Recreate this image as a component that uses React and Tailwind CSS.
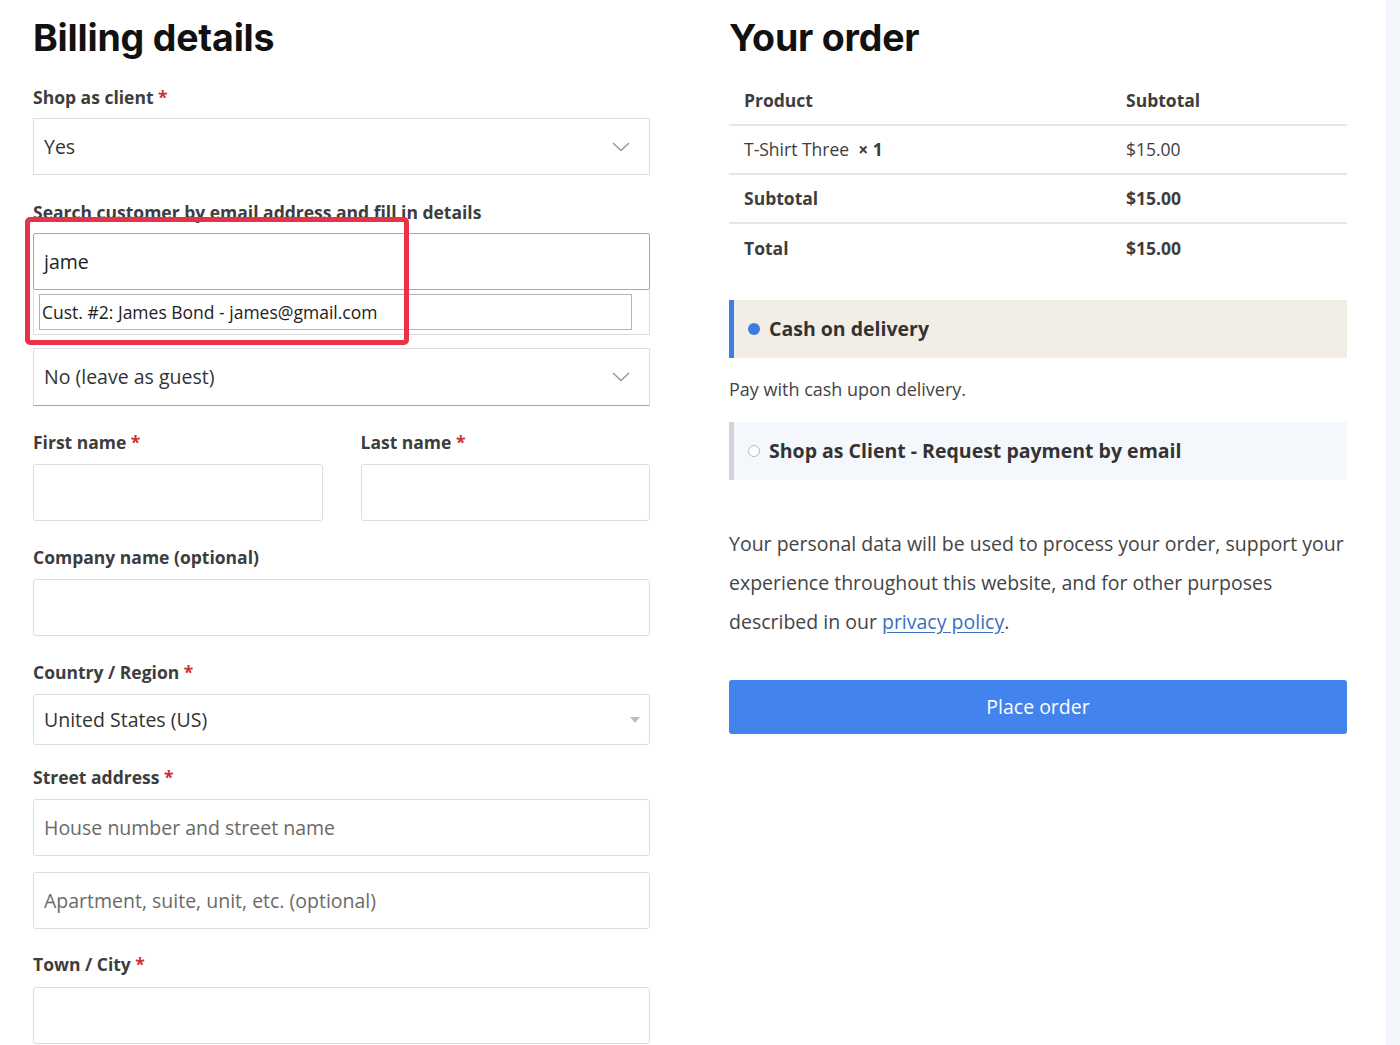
import React from "react";

const body = { fontFamily: '"Open Sans", "Noto Sans", sans-serif' };
const head = { fontFamily: 'Inter, "Open Sans", sans-serif' };

function Chevron() {
  return (
    <svg width="18" height="10" viewBox="0 0 18 10" className="shrink-0">
      <polyline points="1,1 9,8.5 17,1" fill="none" stroke="#9a9a9a" strokeWidth="1.6" />
    </svg>
  );
}

function Label({ children, req, className = "" }) {
  return (
    <div className={"text-[17.5px] leading-[26px] font-bold text-[#3d3d3d] " + className}>
      {children}
      {req && <span className="text-[#cc2f2f]"> *</span>}
    </div>
  );
}

function Input({ placeholder, className = "" }) {
  return (
    <div className={"h-[57px] border border-[#dedede] rounded-[3px] bg-white flex items-center px-[10px] text-[19.5px] text-[#6a6a6a] " + className}>
      {placeholder}
    </div>
  );
}

export default function App() {
  return (
    <div className="w-[1400px] h-[1045px] bg-white flex overflow-hidden" style={body}>
      <div className="w-[33px] shrink-0" />
      {/* Left column */}
      <div className="w-[617px] shrink-0 flex flex-col">
        <h1 className="text-[37.5px] leading-[44px] font-bold text-[#111] mt-[16px] tracking-[-0.2px]" style={head}>
          Billing details
        </h1>
        <Label req className="mt-[24px]">Shop as client</Label>
        <div className="mt-[8px] h-[57px] border border-[#dedede] flex items-center justify-between pl-[10px] pr-[19px] text-[19.5px] text-[#333]">
          <span>Yes</span>
          <Chevron />
        </div>
        <Label className="mt-[24px]">Search customer by email address and fill in details</Label>
        <div className="relative mt-[8px]">
          <div className="h-[57px] border border-[#a8a8a8] rounded-[2px] flex items-center px-[10px] text-[19.5px] text-[#222]">
            jame
          </div>
          <div className="absolute left-0 right-0 top-[57px] h-[45px] border border-t-0 border-[#dcdcdc] bg-white z-10 pl-[5px] pr-[17px] pt-[4px]">
            <div className="h-[36px] border border-[#b4b4b4] bg-white flex items-center pl-[2px] text-[17.5px] text-[#222]">
              Cust. #2: James Bond - james@gmail.com
            </div>
          </div>
          <div className="absolute -left-[8px] -top-[16px] w-[384px] h-[128px] border-[5px] border-[#e6334a] rounded-[5px] z-20" />
        </div>
        <div className="mt-[58px] h-[58px] border border-[#dedede] border-b-[#a3a3a3] flex items-center justify-between pl-[10px] pr-[19px] text-[19.5px] text-[#333]">
          <span>No (leave as guest)</span>
          <Chevron />
        </div>
        <div className="mt-[23px] flex gap-[38px]">
          <div className="flex-1 flex flex-col">
            <Label req>First name</Label>
            <Input className="mt-[9px]" />
          </div>
          <div className="flex-1 flex flex-col">
            <Label req>Last name</Label>
            <Input className="mt-[9px]" />
          </div>
        </div>
        <Label className="mt-[23px]">Company name (optional)</Label>
        <Input className="mt-[9px]" />
        <Label req className="mt-[23px]">Country / Region</Label>
        <div className="mt-[9px] h-[51px] border border-[#dedede] rounded-[3px] flex items-center justify-between pl-[10px] pr-[9px] text-[19.5px] text-[#333]">
          <span>United States (US)</span>
          <svg width="10" height="6" viewBox="0 0 10 6"><polygon points="0,0 10,0 5,6" fill="#bdbdbd" /></svg>
        </div>
        <Label req className="mt-[19px]">Street address</Label>
        <Input className="mt-[9px]" placeholder="House number and street name" />
        <Input className="mt-[16px]" placeholder="Apartment, suite, unit, etc. (optional)" />
        <Label req className="mt-[22px]">Town / City</Label>
        <Input className="mt-[10px]" />
      </div>
      <div className="w-[79px] shrink-0" />
      {/* Right column */}
      <div className="w-[618px] shrink-0 flex flex-col">
        <h1 className="text-[37.5px] leading-[44px] font-bold text-[#111] mt-[16px] tracking-[-0.2px]" style={head}>
          Your order
        </h1>
        <div className="mt-[17px] text-[17.5px] text-[#3d3d3d]">
          <div className="h-[49px] flex items-center font-bold border-b-2 border-[#e6e6e6]">
            <div className="w-[382px] pl-[15px]">Product</div>
            <div className="pl-[15px]">Subtotal</div>
          </div>
          <div className="h-[49px] flex items-center border-b-2 border-[#e6e6e6]">
            <div className="w-[382px] pl-[15px]">
              T-Shirt Three&nbsp; <span className="font-bold">× 1</span>
            </div>
            <div className="pl-[15px]">$15.00</div>
          </div>
          <div className="h-[49px] flex items-center font-bold border-b-2 border-[#e6e6e6]">
            <div className="w-[382px] pl-[15px]">Subtotal</div>
            <div className="pl-[15px]">$15.00</div>
          </div>
          <div className="h-[49px] flex items-center font-bold">
            <div className="w-[382px] pl-[15px]">Total</div>
            <div className="pl-[15px]">$15.00</div>
          </div>
        </div>
        <div className="mt-[27px] h-[58px] bg-[#f2eee5] border-l-[5px] border-[#3f7fe0] flex items-center pl-[14px] gap-[9px]">
          <span className="w-[12px] h-[12px] rounded-full bg-[#3d7de0]" />
          <span className="text-[19.5px] font-bold text-[#333]">Cash on delivery</span>
        </div>
        <div className="mt-[17px] text-[18px] leading-[28px] text-[#444]">Pay with cash upon delivery.</div>
        <div className="mt-[19px] h-[58px] bg-[#f4f8fc] border-l-[5px] border-[#cfd3da] flex items-center pl-[14px] gap-[9px]">
          <span className="w-[12px] h-[12px] rounded-full border border-[#b9b9b9] bg-white" />
          <span className="text-[19.5px] font-bold text-[#333]">Shop as Client - Request payment by email</span>
        </div>
        <p className="mt-[44px] text-[19.5px] leading-[39px] text-[#444]">
          Your personal data will be used to process your order, support your experience throughout this website, and for other purposes described in our{" "}
          <a className="text-[#3a6fba] underline underline-offset-[3px]">privacy policy</a>.
        </p>
        <div className="mt-[39px] h-[54px] rounded-[3px] bg-[#4283ee] flex items-center justify-center text-[19.5px] text-white">
          Place order
        </div>
      </div>
      <div className="flex-1" />
      <div className="w-[14px] shrink-0 bg-[#f3f6fb]" />
    </div>
  );
}
